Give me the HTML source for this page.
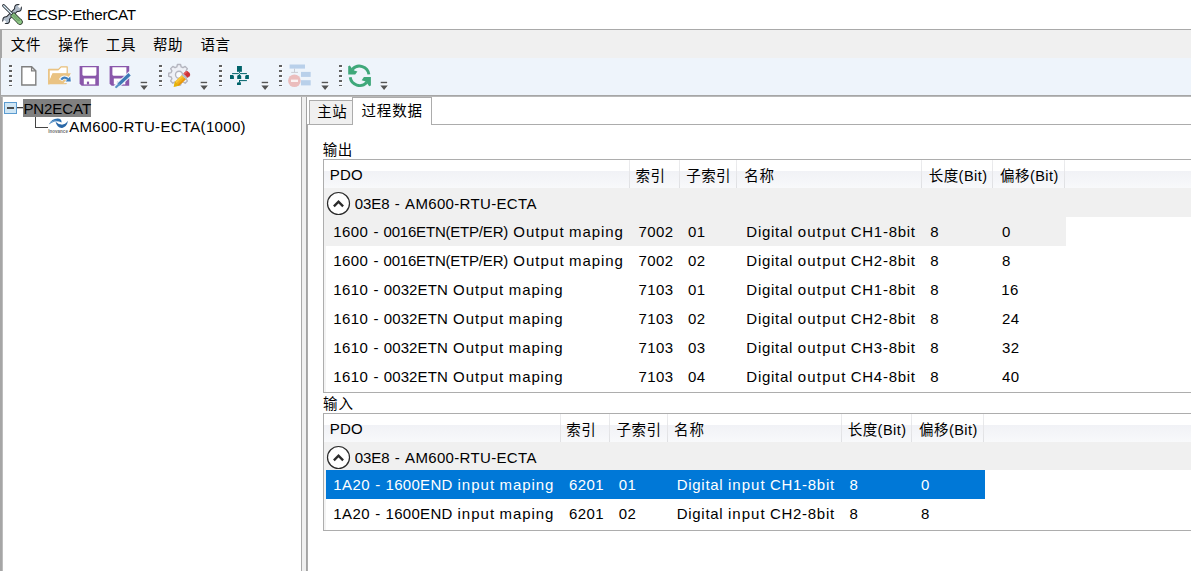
<!DOCTYPE html>
<html lang="zh-CN"><head><meta charset="utf-8"><title>ECSP-EtherCAT</title>
<style>
html,body{margin:0;padding:0;background:#fff;}
body{width:1191px;height:571px;overflow:hidden;position:relative;font-family:"Liberation Sans","Noto Sans CJK SC",sans-serif;}
#app{position:absolute;left:0;top:0;width:1191px;height:571px;overflow:hidden;background:#fff;}
#app div, #app svg{position:absolute;}
.t{position:absolute;white-space:pre;line-height:20px;height:20px;font-family:"Liberation Sans","Noto Sans CJK SC",sans-serif;}
.hdr{background:linear-gradient(#ffffff 0%,#ffffff 41%,#f1f2f6 41%,#f8f9fb 100%);}
.sep{width:1px;background:linear-gradient(#ececee,#dfe0e3);}
.grip i{position:absolute;left:0;width:3px;height:2px;background:#626262;display:block;box-shadow:1px 1px 0 rgba(255,255,255,.75);}
.t b{display:inline-block;font-weight:normal;white-space:pre;vertical-align:baseline;}

</style></head>
<body>
<div id="app">
<!-- title bar -->
<div style="left:0;top:0;width:1191px;height:29px;background:#fff"></div>
<div style="left:0;top:29px;width:1191px;height:1px;background:#a9a9a9"></div>
<!-- left window border -->
<div style="left:0;top:30px;width:2px;height:541px;background:#a6a6a6"></div>
<div style="left:2px;top:97px;width:1px;height:474px;background:#bdbdbd"></div>
<!-- menu bar -->
<div style="left:2px;top:30px;width:1189px;height:28px;background:#f0f0f0"></div>
<!-- toolbar -->
<div style="left:1px;top:58px;width:1190px;height:37px;background:#eef4fb"></div>
<div style="left:1px;top:95px;width:1190px;height:1px;background:#a6a6a6"></div>
<div style="left:1px;top:96px;width:1190px;height:1px;background:#b9b9b9"></div>
<!-- splitter -->
<div style="left:301px;top:97px;width:1px;height:474px;background:#a9a9a9"></div>
<div style="left:302px;top:97px;width:4px;height:474px;background:#f0f0f0"></div>
<div style="left:306px;top:97px;width:1px;height:474px;background:#a3a3a3"></div>
<!-- tab page border -->
<div style="left:307px;top:124px;width:1px;height:447px;background:#acacac"></div>
<div style="left:307px;top:124px;width:884px;height:1px;background:#acacac"></div>
<!-- tab 1 -->
<div style="left:309px;top:100px;width:44px;height:24px;background:#f0f0f0;border:1px solid #acacac;border-bottom:none;box-sizing:border-box"></div>
<!-- tab 2 selected -->
<div style="left:352px;top:97px;width:80px;height:28px;background:#fff;border:1px solid #acacac;border-bottom:none;box-sizing:border-box"></div>

<!-- tree -->
<div style="left:23px;top:99px;width:68px;height:18px;background:#808080"></div>
<div style="left:17px;top:107px;width:6px;height:1px;background:#3a3a3a"></div><div style="left:17px;top:108px;width:6px;height:1px;background:#c4c4c4"></div>
<div style="left:35px;top:117px;width:1px;height:11px;background:#444"></div>
<div style="left:35px;top:127px;width:13px;height:1px;background:#444"></div>
<div style="left:4px;top:102px;width:13px;height:12px;background:#cfe6f5;border:1px solid #5b9bd0;box-sizing:border-box"></div>
<div style="left:7px;top:107px;width:7px;height:2px;background:#4a4a4a"></div>

<!-- table 1 -->
<div style="left:323px;top:159px;width:868px;height:234px;border:1px solid #adadad;border-right:none;box-sizing:border-box;background:#fff"></div>
<div class="hdr" style="left:324px;top:160px;width:867px;height:28px"></div>
<div style="left:324px;top:188px;width:867px;height:1px;background:#d7d7d7"></div>
<div class="sep" style="left:629px;top:160px;height:28px"></div>
<div class="sep" style="left:679px;top:160px;height:28px"></div>
<div class="sep" style="left:736px;top:160px;height:28px"></div>
<div class="sep" style="left:921px;top:160px;height:28px"></div>
<div class="sep" style="left:992px;top:160px;height:28px"></div>
<div class="sep" style="left:1064px;top:160px;height:28px"></div>
<div style="left:324px;top:188px;width:867px;height:29px;background:#f0f0f0"></div>
<div style="left:324px;top:217px;width:2px;height:175px;background:#f3f3f3"></div>
<div style="left:324px;top:217px;width:742px;height:29px;background:#f0f0f0"></div>

<!-- table 2 -->
<div style="left:323px;top:413px;width:868px;height:118px;border:1px solid #adadad;border-right:none;box-sizing:border-box;background:#fff"></div>
<div class="hdr" style="left:324px;top:414px;width:867px;height:28px"></div>
<div style="left:324px;top:442px;width:867px;height:1px;background:#d7d7d7"></div>
<div class="sep" style="left:560px;top:414px;height:28px"></div>
<div class="sep" style="left:609px;top:414px;height:28px"></div>
<div class="sep" style="left:667px;top:414px;height:28px"></div>
<div class="sep" style="left:841px;top:414px;height:28px"></div>
<div class="sep" style="left:911px;top:414px;height:28px"></div>
<div class="sep" style="left:983px;top:414px;height:28px"></div>
<div style="left:324px;top:442px;width:867px;height:28px;background:#f0f0f0"></div>
<div style="left:324px;top:470px;width:2px;height:60px;background:#f3f3f3"></div>
<div style="left:326px;top:470px;width:659px;height:29px;background:#0078d7"></div>

<!-- group expander circles -->
<svg style="left:326px;top:191px" width="25" height="25" viewBox="0 0 25 25"><circle cx="12.5" cy="12.5" r="11" fill="#fff" stroke="#2b2b2b" stroke-width="1.2"/><path d="M7.9 15.3 L12.5 10.7 L17.1 15.3" fill="none" stroke="#2b2b2b" stroke-width="2.4"/></svg>
<svg style="left:325.5px;top:444.5px" width="25" height="25" viewBox="0 0 25 25"><circle cx="12.5" cy="12.5" r="11" fill="#fff" stroke="#2b2b2b" stroke-width="1.2"/><path d="M7.9 15.3 L12.5 10.7 L17.1 15.3" fill="none" stroke="#2b2b2b" stroke-width="2.4"/></svg>

<!-- title icon: crossed wrench + screwdriver -->
<svg style="left:0;top:0" width="30" height="30" viewBox="0 0 30 30">
  <g stroke-linecap="round">
    <!-- wrench -->
    <path d="M7 19 L17.5 8.5" stroke="#252a31" stroke-width="4.6"/>
    <circle cx="18" cy="8" r="3.9" fill="#252a31"/>
    <circle cx="6.2" cy="20.2" r="3.9" fill="#252a31"/>
    <path d="M7 19 L17.5 8.5" stroke="#b0bcc9" stroke-width="2.8"/>
    <circle cx="18" cy="8" r="2.9" fill="#b0bcc9"/>
    <circle cx="6.2" cy="20.2" r="2.9" fill="#b0bcc9"/>
    <path d="M18.8 7.2 L23 3" stroke="#fff" stroke-width="3" stroke-linecap="butt"/>
    <path d="M5.4 21 L1.2 25.2" stroke="#fff" stroke-width="3" stroke-linecap="butt"/>
    <!-- screwdriver shaft -->
    <path d="M3.6 5.6 L11.5 13.5" stroke="#252a31" stroke-width="2.9"/>
    <path d="M3.7 5.7 L11.5 13.5" stroke="#dcf0fa" stroke-width="1.3"/>
    <!-- handle -->
    <path d="M12 14 L20 22" stroke="#2c3b2c" stroke-width="5.6" stroke-linecap="butt"/>
    <path d="M19.6 21.6 L20 22" stroke="#2c3b2c" stroke-width="5.6" stroke-linecap="round"/>
    <path d="M12.4 14.4 L19.9 21.9" stroke="#8cc585" stroke-width="4.2" stroke-linecap="butt"/>
    <path d="M19.5 21.5 L19.9 21.9" stroke="#8cc585" stroke-width="4.2" stroke-linecap="round"/>
    <path d="M12.9 15.7 L18.5 21.3 M14.3 14.9 L19.9 20.5 M13.6 15.3 L19.2 20.9" stroke="#41683f" stroke-width="0.7" stroke-dasharray="0.8 0.9" stroke-linecap="butt"/>
  </g>
</svg>

<!-- toolbar grips -->
<div class="grip" style="left:9px;top:65px;width:4px;height:22px"><i style="top:0"></i><i style="top:5px"></i><i style="top:10px"></i><i style="top:15px"></i><i style="top:20px;height:1px"></i></div>
<div class="grip" style="left:159px;top:65px;width:4px;height:22px"><i style="top:0"></i><i style="top:5px"></i><i style="top:10px"></i><i style="top:15px"></i><i style="top:20px;height:1px"></i></div>
<div class="grip" style="left:219px;top:65px;width:4px;height:22px"><i style="top:0"></i><i style="top:5px"></i><i style="top:10px"></i><i style="top:15px"></i><i style="top:20px;height:1px"></i></div>
<div class="grip" style="left:279px;top:65px;width:4px;height:22px"><i style="top:0"></i><i style="top:5px"></i><i style="top:10px"></i><i style="top:15px"></i><i style="top:20px;height:1px"></i></div>
<div class="grip" style="left:339px;top:65px;width:4px;height:22px"><i style="top:0"></i><i style="top:5px"></i><i style="top:10px"></i><i style="top:15px"></i><i style="top:20px;height:1px"></i></div>

<!-- toolbar overflow arrows -->
<svg class="ov" style="left:139px;top:80px" width="12" height="12" viewBox="0 0 12 12"><path d="M2 3.9H8.6" stroke="#fff" stroke-width="1.2" fill="none"/><path d="M2 6.2H9.4L5.7 10.6Z" fill="#fff"/><path d="M1.7 2.5H8.1" stroke="#555" stroke-width="1.4" fill="none"/><path d="M1.4 5.5H8.8L5.1 9.9Z" fill="#555"/></svg>
<svg class="ov" style="left:199px;top:80px" width="12" height="12" viewBox="0 0 12 12"><path d="M2 3.9H8.6" stroke="#fff" stroke-width="1.2" fill="none"/><path d="M2 6.2H9.4L5.7 10.6Z" fill="#fff"/><path d="M1.7 2.5H8.1" stroke="#555" stroke-width="1.4" fill="none"/><path d="M1.4 5.5H8.8L5.1 9.9Z" fill="#555"/></svg>
<svg class="ov" style="left:259.5px;top:80px" width="12" height="12" viewBox="0 0 12 12"><path d="M2 3.9H8.6" stroke="#fff" stroke-width="1.2" fill="none"/><path d="M2 6.2H9.4L5.7 10.6Z" fill="#fff"/><path d="M1.7 2.5H8.1" stroke="#555" stroke-width="1.4" fill="none"/><path d="M1.4 5.5H8.8L5.1 9.9Z" fill="#555"/></svg>
<svg class="ov" style="left:319.5px;top:80px" width="12" height="12" viewBox="0 0 12 12"><path d="M2 3.9H8.6" stroke="#fff" stroke-width="1.2" fill="none"/><path d="M2 6.2H9.4L5.7 10.6Z" fill="#fff"/><path d="M1.7 2.5H8.1" stroke="#555" stroke-width="1.4" fill="none"/><path d="M1.4 5.5H8.8L5.1 9.9Z" fill="#555"/></svg>
<svg class="ov" style="left:379px;top:80px" width="12" height="12" viewBox="0 0 12 12"><path d="M2 3.9H8.6" stroke="#fff" stroke-width="1.2" fill="none"/><path d="M2 6.2H9.4L5.7 10.6Z" fill="#fff"/><path d="M1.7 2.5H8.1" stroke="#555" stroke-width="1.4" fill="none"/><path d="M1.4 5.5H8.8L5.1 9.9Z" fill="#555"/></svg>

<!-- new document -->
<svg style="left:18px;top:62px" width="24" height="28" viewBox="18 62 24 28">
  <path d="M21.8 66.7 H31.6 L35.8 70.9 V85 H21.8 Z" fill="#fff" stroke="#7f7f7f" stroke-width="1.4" stroke-linejoin="miter"/>
  <path d="M31.6 66.7 V70.9 H35.8" fill="none" stroke="#7f7f7f" stroke-width="1.3"/>
</svg>

<!-- open folder -->
<svg style="left:44px;top:62px" width="32" height="28" viewBox="44 62 32 28">
  <path d="M48.8 84 V69.4 H58.6 L61 66.8 H67.2 V74 H52.8 Z" fill="#fff" stroke="#e8bf78" stroke-width="1.2" stroke-linejoin="round"/>
  <path d="M48.4 84.3 L52.6 73.2 H70.8 L66.4 84.3 Z" fill="#eac383"/>
  <path d="M48.3 69 H58.6 V70.4 H49.6 V83 L48.3 84.3 Z" fill="#eac383"/>
  <path d="M60.6 80.2 Q63.5 75.2 68.6 79.4" fill="none" stroke="#f4f8fc" stroke-width="4.2"/>
  <path d="M65.2 82.3 L71.6 82 L70.6 75.6 Z" fill="#f4f8fc" stroke="#f4f8fc" stroke-width="1.6"/>
  <path d="M61.2 79.6 Q64 76 68 79.2" fill="none" stroke="#3f7fbd" stroke-width="2.2"/>
  <path d="M65.6 81.6 L70.8 81.4 L70.2 76.4 Z" fill="#3f7fbd"/>
</svg>

<!-- save -->
<svg style="left:76px;top:62px" width="28" height="28" viewBox="76 62 28 28">
  <path d="M79.6 66 H98.9 V85.8 H81.6 L79.6 83.8 Z" fill="#8a57ab"/>
  <path d="M82.4 67.3 H96.4 V74.6 Q96.4 75.7 95.3 75.7 H83.5 Q82.4 75.7 82.4 74.6 Z" fill="#fff"/>
  <rect x="83.8" y="78.5" width="11.5" height="5.9" fill="#fff"/>
  <rect x="86.9" y="81.6" width="2.2" height="2.8" fill="#8a57ab"/>
</svg>

<!-- save as -->
<svg style="left:106px;top:62px" width="30" height="28" viewBox="106 62 30 28">
  <path d="M109.6 66 H129.2 V85.8 H111.6 L109.6 83.8 Z" fill="#8a57ab"/>
  <path d="M112.4 67.3 H126.4 V74.6 Q126.4 75.7 125.3 75.7 H113.5 Q112.4 75.7 112.4 74.6 Z" fill="#fff"/>
  <rect x="113.8" y="78.5" width="11.5" height="5.9" fill="#fff"/>
  <rect x="116.9" y="81.6" width="1.6" height="1.6" fill="#8a57ab" opacity=".6"/>
  <path d="M116.6 86.6 L130 73.8" stroke="#eef4fb" stroke-width="5.2" stroke-linecap="round"/>
  <path d="M118.6 84.6 L129.6 74.2" stroke="#3d7ab6" stroke-width="3.3" stroke-linecap="butt"/>
  <path d="M116.2 87 L119.2 84.2" stroke="#5a93c8" stroke-width="2.2" stroke-linecap="round"/>
</svg>

<!-- gear + pencil -->
<svg style="left:164px;top:62px" width="32" height="28" viewBox="164 62 32 28">
  <g fill="none" stroke="#b4b5bf" stroke-width="1.5" stroke-linejoin="round" transform="translate(179 74.8) scale(0.92) translate(-179 -76)">
    <path d="M177.3 64.8 h3.4 l.7 2.7 l1.9 .8 l2.4-1.4 l2.4 2.4 l-1.4 2.4 l.8 1.9 l2.7 .7 v3.4 l-2.7 .7 l-.8 1.9 l1.4 2.4 l-2.4 2.4 l-2.4-1.4 l-1.9 .8 l-.7 2.7 h-3.4 l-.7-2.7 l-1.9-.8 l-2.4 1.4 l-2.4-2.4 l1.4-2.4 l-.8-1.9 l-2.7-.7 v-3.4 l2.7-.7 l.8-1.9 l-1.4-2.4 l2.4-2.4 l2.4 1.4 l1.9-.8 Z" fill="#eef0f6"/>
    <circle cx="179" cy="76" r="3.8" fill="#f8fafd"/>
  </g>
  <g transform="translate(173.7 86.8) rotate(-43.3)">
    <path d="M0 0 L4.6 -2.8 H14 V2.8 H4.6 Z" fill="#f2b21a"/>
    <path d="M0 0 L4.6 -2.8 V2.8 Z" fill="#e3b309"/>
    <path d="M4.6 -2.8 H14 V-0.8 H4.6 Z" fill="#f7c83a"/>
    <path d="M4.6 1.1 H14 V2.8 H4.6 Z" fill="#e8960f"/>
    <rect x="14" y="-2.8" width="2.2" height="5.6" fill="#b9bcc4"/>
    <path d="M16.2 -3 H19.2 Q21 -3 21 0 Q21 3 19.2 3 H16.2 Z" fill="#cf3136"/>
    <path d="M16.2 -3 H19.2 Q20.4 -3 20.7 -1.3 H16.2 Z" fill="#e05a5a"/>
  </g>
</svg>

<!-- network (teal) -->
<svg style="left:226px;top:62px" width="28" height="28" viewBox="226 62 28 28">
  <g fill="#00636a">
    <rect x="237" y="66" width="4.9" height="5.8"/>
    <rect x="232.1" y="73.1" width="14.8" height="1"/>
    <rect x="239" y="71.8" width="0.9" height="4"/>
    <path d="M230 75.1 H233 L233.9 76 V78.9 H230 Z"/>
    <path d="M237.2 76 L238.1 75.1 H240.3 L241.2 76 V78.9 H237.2 Z"/>
    <path d="M245.2 76 L246.1 75.1 H248.9 V78.9 H245.2 Z"/>
    <rect x="239.2" y="80.1" width="7.7" height="1"/>
    <rect x="239" y="80.1" width="1" height="2.4"/>
    <path d="M237 83.1 L237.9 82.2 H240.9 V84.9 H237 Z"/>
  </g>
  <path d="M238.4 72.6 L240.4 74.6 M240.4 72.6 L238.4 74.6" stroke="#dfeef0" stroke-width=".7"/>
</svg>

<!-- disabled tree/remove -->
<svg style="left:286px;top:62px" width="28" height="28" viewBox="286 62 28 28">
  <rect x="289.6" y="64.5" width="15.4" height="4.1" fill="#b9d0ea"/>
  <path d="M294.5 68.6 V72.4 M291.2 72.4 H298" stroke="#c9ccd3" stroke-width="1"/>
  <rect x="301" y="71.9" width="9.7" height="5" fill="#b9d0ea"/>
  <rect x="301" y="80.2" width="9.7" height="5.2" fill="#b9d0ea"/>
  <circle cx="294.4" cy="80.7" r="6.3" fill="#ebbdbd"/>
  <rect x="291" y="79.6" width="7" height="2.4" fill="#fbf3f3"/>
</svg>

<!-- refresh -->
<svg style="left:345px;top:61px" width="30" height="30" viewBox="345 61 30 30">
  <g id="rf" fill="#3fa87a">
    <path d="M368.9 74.4 A9.6 9.6 0 0 0 352.4 69.2" fill="none" stroke="#3fa87a" stroke-width="2.9"/>
    <path d="M348.2 66.2 L349.9 65.5 L351.8 68.2 L354.2 70.4 L357.4 71.5 L355.2 74.6 L348.2 74.6 Z"/>
  </g>
  <g fill="#3fa87a" transform="rotate(180 359.55 75.85)">
    <path d="M368.9 74.4 A9.6 9.6 0 0 0 352.4 69.2" fill="none" stroke="#3fa87a" stroke-width="2.9"/>
    <path d="M348.2 66.2 L349.9 65.5 L351.8 68.2 L354.2 70.4 L357.4 71.5 L355.2 74.6 L348.2 74.6 Z"/>
  </g>
</svg>

<!-- tree node logo -->
<svg style="left:47px;top:117px" width="23" height="18" viewBox="47 117 23 18">
  <rect x="48" y="118" width="20.4" height="16" fill="#fff"/>
  <path d="M48.8 124.6 Q51.6 118.6 57.6 118.5 Q61.8 118.8 61.6 122.4 Q57.6 120.6 54.6 121.6 Q51.4 122.6 48.8 124.6 Z" fill="#2f72b2"/>
  <path d="M50 122.6 Q53 120.4 56.6 121" stroke="#9fc3e4" stroke-width=".7" fill="none"/>
  <path d="M55.6 121.8 Q57 128.2 62.2 127.9 Q66.8 127 68 120.8 Q64.8 125 61.4 124.6 Q58.2 124.4 55.6 121.8 Z" fill="#2a68a8"/>
  <text x="48.3" y="133.1" font-size="4.8" font-family="Liberation Sans, sans-serif" fill="#707070" textLength="19.6" lengthAdjust="spacingAndGlyphs" font-weight="bold">Inovance</text>
</svg>

<span class="t" style="left:27.00px;top:5.33px;font-size:15.2px;color:#000"><b style="width:109.00px;letter-spacing:-0.229px;text-indent:-0.11px">ECSP-EtherCAT</b></span>
<span class="t" style="left:10.40px;top:35.28px;font-size:14.5px;color:#000"><b style="width:30.40px;letter-spacing:0.700px;text-indent:0.35px">文件</b></span>
<span class="t" style="left:57.90px;top:35.28px;font-size:14.5px;color:#000"><b style="width:30.80px;letter-spacing:0.900px;text-indent:0.45px">操作</b></span>
<span class="t" style="left:105.50px;top:35.28px;font-size:14.5px;color:#000"><b style="width:30.40px;letter-spacing:0.700px;text-indent:0.35px">工具</b></span>
<span class="t" style="left:152.70px;top:35.28px;font-size:14.5px;color:#000"><b style="width:30.00px;letter-spacing:0.500px;text-indent:0.25px">帮助</b></span>
<span class="t" style="left:200.40px;top:35.28px;font-size:14.5px;color:#000"><b style="width:29.90px;letter-spacing:0.450px;text-indent:0.23px">语言</b></span>
<span class="t" style="left:23.40px;top:98.60px;font-size:15px;color:#000"><b style="width:67.64px;letter-spacing:-0.063px;text-indent:-0.03px">PN2ECAT</b></span>
<span class="t" style="left:69.00px;top:117.20px;font-size:15px;color:#000"><b style="width:176.76px;letter-spacing:0.321px;text-indent:0.16px">AM600-RTU-ECTA(1000)</b></span>
<span class="t" style="left:317.00px;top:101.98px;font-size:14.5px;color:#000"><b style="width:30.00px;letter-spacing:0.500px;text-indent:0.25px">主站</b></span>
<span class="t" style="left:361.10px;top:100.98px;font-size:14.5px;color:#000"><b style="width:61.40px;letter-spacing:0.850px;text-indent:0.42px">过程数据</b></span>
<span class="t" style="left:322.50px;top:140.28px;font-size:14.5px;color:#000"><b style="width:30.00px;letter-spacing:0.500px;text-indent:0.25px">输出</b></span>
<span class="t" style="left:322.50px;top:394.28px;font-size:14.5px;color:#000"><b style="width:31.00px;letter-spacing:1.000px;text-indent:0.50px">输入</b></span>
<span class="t" style="left:329.80px;top:165.00px;font-size:15px;color:#000"><b style="width:32.92px;letter-spacing:0.135px;text-indent:0.07px">PDO</b></span>
<span class="t" style="left:635.30px;top:166.18px;font-size:14.5px;color:#000"><b style="width:30.00px;letter-spacing:0.500px;text-indent:0.25px">索引</b></span>
<span class="t" style="left:686.10px;top:166.18px;font-size:14.5px;color:#000"><b style="width:44.70px;letter-spacing:0.400px;text-indent:0.20px">子索引</b></span>
<span class="t" style="left:743.70px;top:166.18px;font-size:14.5px;color:#000"><b style="width:30.80px;letter-spacing:0.900px;text-indent:0.45px">名称</b></span>
<span class="t" style="left:928.50px;top:166.18px;font-size:14.5px;color:#000"><b style="width:58.71px;letter-spacing:0.445px;text-indent:0.22px">长度(Bit)</b></span>
<span class="t" style="left:999.80px;top:166.18px;font-size:14.5px;color:#000"><b style="width:58.71px;letter-spacing:0.445px;text-indent:0.22px">偏移(Bit)</b></span>
<span class="t" style="left:354.80px;top:193.60px;font-size:15px;color:#000;word-spacing:0.30px"><b style="width:34.67px;letter-spacing:-0.095px;text-indent:-0.05px">03E8</b> <b style="width:6.53px;letter-spacing:1.532px;text-indent:0.77px">-</b> <b style="width:131.69px;letter-spacing:0.337px;text-indent:0.17px">AM600-RTU-ECTA</b></span>
<span class="t" style="left:333.00px;top:221.80px;font-size:15px;color:#000;word-spacing:0.30px"><b style="width:35.21px;letter-spacing:0.458px;text-indent:0.23px">1600</b> <b style="width:6.53px;letter-spacing:1.532px;text-indent:0.77px">-</b> <b style="width:124.50px;letter-spacing:-0.203px;text-indent:-0.10px">0016ETN(ETP/ER)</b> <b style="width:51.47px;letter-spacing:1.073px;text-indent:0.54px">Output</b> <b style="width:54.77px;letter-spacing:0.928px;text-indent:0.46px">maping</b></span>
<span class="t" style="left:638.20px;top:221.80px;font-size:15px;color:#000"><b style="width:35.21px;letter-spacing:0.458px;text-indent:0.23px">7002</b></span>
<span class="t" style="left:687.80px;top:221.80px;font-size:15px;color:#000"><b style="width:17.60px;letter-spacing:0.458px;text-indent:0.23px">01</b></span>
<span class="t" style="left:746.00px;top:221.80px;font-size:15px;color:#000;word-spacing:0.30px"><b style="width:46.75px;letter-spacing:0.724px;text-indent:0.36px">Digital</b> <b style="width:48.73px;letter-spacing:1.168px;text-indent:0.58px">output</b> <b style="width:64.93px;letter-spacing:0.718px;text-indent:0.36px">CH1-8bit</b></span>
<span class="t" style="left:930.10px;top:221.80px;font-size:15px;color:#000"><b style="width:8.80px;letter-spacing:0.458px;text-indent:0.23px">8</b></span>
<span class="t" style="left:1001.80px;top:221.80px;font-size:15px;color:#000"><b style="width:8.80px;letter-spacing:0.458px;text-indent:0.23px">0</b></span>
<span class="t" style="left:333.00px;top:250.80px;font-size:15px;color:#000;word-spacing:0.30px"><b style="width:35.21px;letter-spacing:0.458px;text-indent:0.23px">1600</b> <b style="width:6.53px;letter-spacing:1.532px;text-indent:0.77px">-</b> <b style="width:124.50px;letter-spacing:-0.203px;text-indent:-0.10px">0016ETN(ETP/ER)</b> <b style="width:51.47px;letter-spacing:1.073px;text-indent:0.54px">Output</b> <b style="width:54.77px;letter-spacing:0.928px;text-indent:0.46px">maping</b></span>
<span class="t" style="left:638.20px;top:250.80px;font-size:15px;color:#000"><b style="width:35.21px;letter-spacing:0.458px;text-indent:0.23px">7002</b></span>
<span class="t" style="left:687.80px;top:250.80px;font-size:15px;color:#000"><b style="width:17.60px;letter-spacing:0.458px;text-indent:0.23px">02</b></span>
<span class="t" style="left:746.00px;top:250.80px;font-size:15px;color:#000;word-spacing:0.30px"><b style="width:46.75px;letter-spacing:0.724px;text-indent:0.36px">Digital</b> <b style="width:48.73px;letter-spacing:1.168px;text-indent:0.58px">output</b> <b style="width:64.93px;letter-spacing:0.718px;text-indent:0.36px">CH2-8bit</b></span>
<span class="t" style="left:930.10px;top:250.80px;font-size:15px;color:#000"><b style="width:8.80px;letter-spacing:0.458px;text-indent:0.23px">8</b></span>
<span class="t" style="left:1001.80px;top:250.80px;font-size:15px;color:#000"><b style="width:8.80px;letter-spacing:0.458px;text-indent:0.23px">8</b></span>
<span class="t" style="left:333.00px;top:279.80px;font-size:15px;color:#000;word-spacing:0.30px"><b style="width:35.21px;letter-spacing:0.458px;text-indent:0.23px">1610</b> <b style="width:6.53px;letter-spacing:1.532px;text-indent:0.77px">-</b> <b style="width:64.24px;letter-spacing:0.124px;text-indent:0.06px">0032ETN</b> <b style="width:51.47px;letter-spacing:1.073px;text-indent:0.54px">Output</b> <b style="width:54.77px;letter-spacing:0.928px;text-indent:0.46px">maping</b></span>
<span class="t" style="left:638.20px;top:279.80px;font-size:15px;color:#000"><b style="width:35.21px;letter-spacing:0.458px;text-indent:0.23px">7103</b></span>
<span class="t" style="left:687.80px;top:279.80px;font-size:15px;color:#000"><b style="width:17.60px;letter-spacing:0.458px;text-indent:0.23px">01</b></span>
<span class="t" style="left:746.00px;top:279.80px;font-size:15px;color:#000;word-spacing:0.30px"><b style="width:46.75px;letter-spacing:0.724px;text-indent:0.36px">Digital</b> <b style="width:48.73px;letter-spacing:1.168px;text-indent:0.58px">output</b> <b style="width:64.93px;letter-spacing:0.718px;text-indent:0.36px">CH1-8bit</b></span>
<span class="t" style="left:930.10px;top:279.80px;font-size:15px;color:#000"><b style="width:8.80px;letter-spacing:0.458px;text-indent:0.23px">8</b></span>
<span class="t" style="left:1001.10px;top:279.80px;font-size:15px;color:#000"><b style="width:17.60px;letter-spacing:0.458px;text-indent:0.23px">16</b></span>
<span class="t" style="left:333.00px;top:308.80px;font-size:15px;color:#000;word-spacing:0.30px"><b style="width:35.21px;letter-spacing:0.458px;text-indent:0.23px">1610</b> <b style="width:6.53px;letter-spacing:1.532px;text-indent:0.77px">-</b> <b style="width:64.24px;letter-spacing:0.124px;text-indent:0.06px">0032ETN</b> <b style="width:51.47px;letter-spacing:1.073px;text-indent:0.54px">Output</b> <b style="width:54.77px;letter-spacing:0.928px;text-indent:0.46px">maping</b></span>
<span class="t" style="left:638.20px;top:308.80px;font-size:15px;color:#000"><b style="width:35.21px;letter-spacing:0.458px;text-indent:0.23px">7103</b></span>
<span class="t" style="left:687.80px;top:308.80px;font-size:15px;color:#000"><b style="width:17.60px;letter-spacing:0.458px;text-indent:0.23px">02</b></span>
<span class="t" style="left:746.00px;top:308.80px;font-size:15px;color:#000;word-spacing:0.30px"><b style="width:46.75px;letter-spacing:0.724px;text-indent:0.36px">Digital</b> <b style="width:48.73px;letter-spacing:1.168px;text-indent:0.58px">output</b> <b style="width:64.93px;letter-spacing:0.718px;text-indent:0.36px">CH2-8bit</b></span>
<span class="t" style="left:930.10px;top:308.80px;font-size:15px;color:#000"><b style="width:8.80px;letter-spacing:0.458px;text-indent:0.23px">8</b></span>
<span class="t" style="left:1001.80px;top:308.80px;font-size:15px;color:#000"><b style="width:17.60px;letter-spacing:0.458px;text-indent:0.23px">24</b></span>
<span class="t" style="left:333.00px;top:337.80px;font-size:15px;color:#000;word-spacing:0.30px"><b style="width:35.21px;letter-spacing:0.458px;text-indent:0.23px">1610</b> <b style="width:6.53px;letter-spacing:1.532px;text-indent:0.77px">-</b> <b style="width:64.24px;letter-spacing:0.124px;text-indent:0.06px">0032ETN</b> <b style="width:51.47px;letter-spacing:1.073px;text-indent:0.54px">Output</b> <b style="width:54.77px;letter-spacing:0.928px;text-indent:0.46px">maping</b></span>
<span class="t" style="left:638.20px;top:337.80px;font-size:15px;color:#000"><b style="width:35.21px;letter-spacing:0.458px;text-indent:0.23px">7103</b></span>
<span class="t" style="left:687.80px;top:337.80px;font-size:15px;color:#000"><b style="width:17.60px;letter-spacing:0.458px;text-indent:0.23px">03</b></span>
<span class="t" style="left:746.00px;top:337.80px;font-size:15px;color:#000;word-spacing:0.30px"><b style="width:46.75px;letter-spacing:0.724px;text-indent:0.36px">Digital</b> <b style="width:48.73px;letter-spacing:1.168px;text-indent:0.58px">output</b> <b style="width:64.93px;letter-spacing:0.718px;text-indent:0.36px">CH3-8bit</b></span>
<span class="t" style="left:930.10px;top:337.80px;font-size:15px;color:#000"><b style="width:8.80px;letter-spacing:0.458px;text-indent:0.23px">8</b></span>
<span class="t" style="left:1001.80px;top:337.80px;font-size:15px;color:#000"><b style="width:17.60px;letter-spacing:0.458px;text-indent:0.23px">32</b></span>
<span class="t" style="left:333.00px;top:366.80px;font-size:15px;color:#000;word-spacing:0.30px"><b style="width:35.21px;letter-spacing:0.458px;text-indent:0.23px">1610</b> <b style="width:6.53px;letter-spacing:1.532px;text-indent:0.77px">-</b> <b style="width:64.24px;letter-spacing:0.124px;text-indent:0.06px">0032ETN</b> <b style="width:51.47px;letter-spacing:1.073px;text-indent:0.54px">Output</b> <b style="width:54.77px;letter-spacing:0.928px;text-indent:0.46px">maping</b></span>
<span class="t" style="left:638.20px;top:366.80px;font-size:15px;color:#000"><b style="width:35.21px;letter-spacing:0.458px;text-indent:0.23px">7103</b></span>
<span class="t" style="left:687.80px;top:366.80px;font-size:15px;color:#000"><b style="width:17.60px;letter-spacing:0.458px;text-indent:0.23px">04</b></span>
<span class="t" style="left:746.00px;top:366.80px;font-size:15px;color:#000;word-spacing:0.30px"><b style="width:46.75px;letter-spacing:0.724px;text-indent:0.36px">Digital</b> <b style="width:48.73px;letter-spacing:1.168px;text-indent:0.58px">output</b> <b style="width:64.93px;letter-spacing:0.718px;text-indent:0.36px">CH4-8bit</b></span>
<span class="t" style="left:930.10px;top:366.80px;font-size:15px;color:#000"><b style="width:8.80px;letter-spacing:0.458px;text-indent:0.23px">8</b></span>
<span class="t" style="left:1001.80px;top:366.80px;font-size:15px;color:#000"><b style="width:17.60px;letter-spacing:0.458px;text-indent:0.23px">40</b></span>
<span class="t" style="left:329.80px;top:419.20px;font-size:15px;color:#000"><b style="width:32.92px;letter-spacing:0.135px;text-indent:0.07px">PDO</b></span>
<span class="t" style="left:566.00px;top:420.38px;font-size:14.5px;color:#000"><b style="width:30.00px;letter-spacing:0.500px;text-indent:0.25px">索引</b></span>
<span class="t" style="left:616.30px;top:420.38px;font-size:14.5px;color:#000"><b style="width:44.90px;letter-spacing:0.467px;text-indent:0.23px">子索引</b></span>
<span class="t" style="left:673.50px;top:420.38px;font-size:14.5px;color:#000"><b style="width:30.90px;letter-spacing:0.950px;text-indent:0.47px">名称</b></span>
<span class="t" style="left:847.50px;top:420.38px;font-size:14.5px;color:#000"><b style="width:58.71px;letter-spacing:0.445px;text-indent:0.22px">长度(Bit)</b></span>
<span class="t" style="left:918.80px;top:420.38px;font-size:14.5px;color:#000"><b style="width:58.71px;letter-spacing:0.445px;text-indent:0.22px">偏移(Bit)</b></span>
<span class="t" style="left:354.80px;top:448.00px;font-size:15px;color:#000;word-spacing:0.30px"><b style="width:34.67px;letter-spacing:-0.095px;text-indent:-0.05px">03E8</b> <b style="width:6.53px;letter-spacing:1.532px;text-indent:0.77px">-</b> <b style="width:131.69px;letter-spacing:0.337px;text-indent:0.17px">AM600-RTU-ECTA</b></span>
<span class="t" style="left:333.00px;top:475.20px;font-size:15px;color:#fff;word-spacing:0.30px"><b style="width:36.94px;letter-spacing:0.473px;text-indent:0.24px">1A20</b> <b style="width:6.53px;letter-spacing:1.532px;text-indent:0.77px">-</b> <b style="width:67.13px;letter-spacing:0.298px;text-indent:0.15px">1600END</b> <b style="width:37.58px;letter-spacing:1.009px;text-indent:0.50px">input</b> <b style="width:54.77px;letter-spacing:0.928px;text-indent:0.46px">maping</b></span>
<span class="t" style="left:568.70px;top:475.20px;font-size:15px;color:#fff"><b style="width:35.21px;letter-spacing:0.458px;text-indent:0.23px">6201</b></span>
<span class="t" style="left:618.60px;top:475.20px;font-size:15px;color:#fff"><b style="width:17.60px;letter-spacing:0.458px;text-indent:0.23px">01</b></span>
<span class="t" style="left:676.30px;top:475.20px;font-size:15px;color:#fff;word-spacing:0.30px"><b style="width:46.75px;letter-spacing:0.724px;text-indent:0.36px">Digital</b> <b style="width:37.58px;letter-spacing:1.009px;text-indent:0.50px">input</b> <b style="width:64.93px;letter-spacing:0.718px;text-indent:0.36px">CH1-8bit</b></span>
<span class="t" style="left:849.30px;top:475.20px;font-size:15px;color:#fff"><b style="width:8.80px;letter-spacing:0.458px;text-indent:0.23px">8</b></span>
<span class="t" style="left:920.80px;top:475.20px;font-size:15px;color:#fff"><b style="width:8.80px;letter-spacing:0.458px;text-indent:0.23px">0</b></span>
<span class="t" style="left:333.00px;top:504.20px;font-size:15px;color:#000;word-spacing:0.30px"><b style="width:36.94px;letter-spacing:0.473px;text-indent:0.24px">1A20</b> <b style="width:6.53px;letter-spacing:1.532px;text-indent:0.77px">-</b> <b style="width:67.13px;letter-spacing:0.298px;text-indent:0.15px">1600END</b> <b style="width:37.58px;letter-spacing:1.009px;text-indent:0.50px">input</b> <b style="width:54.77px;letter-spacing:0.928px;text-indent:0.46px">maping</b></span>
<span class="t" style="left:568.70px;top:504.20px;font-size:15px;color:#000"><b style="width:35.21px;letter-spacing:0.458px;text-indent:0.23px">6201</b></span>
<span class="t" style="left:618.60px;top:504.20px;font-size:15px;color:#000"><b style="width:17.60px;letter-spacing:0.458px;text-indent:0.23px">02</b></span>
<span class="t" style="left:676.30px;top:504.20px;font-size:15px;color:#000;word-spacing:0.30px"><b style="width:46.75px;letter-spacing:0.724px;text-indent:0.36px">Digital</b> <b style="width:37.58px;letter-spacing:1.009px;text-indent:0.50px">input</b> <b style="width:64.93px;letter-spacing:0.718px;text-indent:0.36px">CH2-8bit</b></span>
<span class="t" style="left:849.30px;top:504.20px;font-size:15px;color:#000"><b style="width:8.80px;letter-spacing:0.458px;text-indent:0.23px">8</b></span>
<span class="t" style="left:920.80px;top:504.20px;font-size:15px;color:#000"><b style="width:8.80px;letter-spacing:0.458px;text-indent:0.23px">8</b></span>
</div>
</body></html>
